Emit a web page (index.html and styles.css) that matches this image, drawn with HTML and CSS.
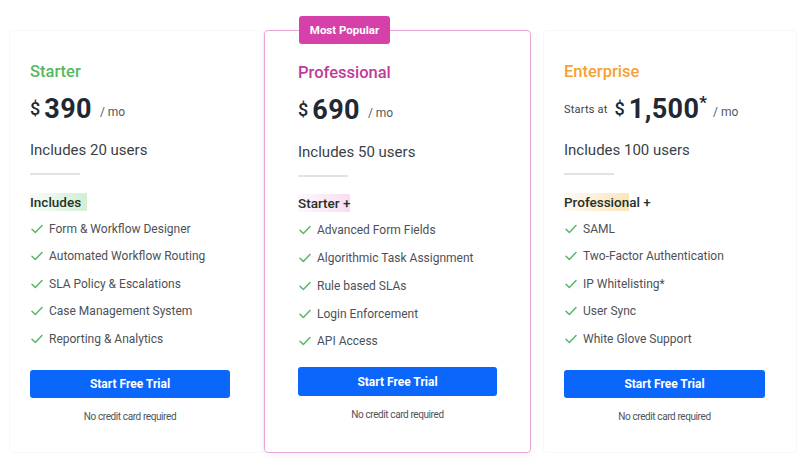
FILE: index.html
```html
<!DOCTYPE html>
<html>
<head>
<meta charset="utf-8">
<link rel="stylesheet" href="styles.css">
</head>
<body>
<div class="pricing">
  <div class="card side">
    <div class="title green">Starter</div>
    <div class="price"><span class="cur">$</span><span class="amt">390</span><span class="per">/ mo</span></div>
    <div class="users">Includes 20 users</div>
    <div class="divider"></div>
    <div class="inc"><span class="hl hl-green">Includes</span></div>
    <ul class="features">
      <li><svg class="check" viewBox="0 0 12 10"><polyline points="1,5.2 4.3,8.5 11,1.5"/></svg>Form &amp; Workflow Designer</li>
      <li><svg class="check" viewBox="0 0 12 10"><polyline points="1,5.2 4.3,8.5 11,1.5"/></svg>Automated Workflow Routing</li>
      <li><svg class="check" viewBox="0 0 12 10"><polyline points="1,5.2 4.3,8.5 11,1.5"/></svg>SLA Policy &amp; Escalations</li>
      <li><svg class="check" viewBox="0 0 12 10"><polyline points="1,5.2 4.3,8.5 11,1.5"/></svg>Case Management System</li>
      <li><svg class="check" viewBox="0 0 12 10"><polyline points="1,5.2 4.3,8.5 11,1.5"/></svg>Reporting &amp; Analytics</li>
    </ul>
    <button class="btn">Start Free Trial</button>
    <div class="note">No credit card required</div>
  </div>

  <div class="card featured">
    <div class="badge">Most Popular</div>
    <div class="title pink">Professional</div>
    <div class="price"><span class="cur">$</span><span class="amt">690</span><span class="per">/ mo</span></div>
    <div class="users">Includes 50 users</div>
    <div class="divider"></div>
    <div class="inc"><span class="hl hl-pink">Starter +</span></div>
    <ul class="features">
      <li><svg class="check" viewBox="0 0 12 10"><polyline points="1,5.2 4.3,8.5 11,1.5"/></svg>Advanced Form Fields</li>
      <li><svg class="check" viewBox="0 0 12 10"><polyline points="1,5.2 4.3,8.5 11,1.5"/></svg>Algorithmic Task Assignment</li>
      <li><svg class="check" viewBox="0 0 12 10"><polyline points="1,5.2 4.3,8.5 11,1.5"/></svg>Rule based SLAs</li>
      <li><svg class="check" viewBox="0 0 12 10"><polyline points="1,5.2 4.3,8.5 11,1.5"/></svg>Login Enforcement</li>
      <li><svg class="check" viewBox="0 0 12 10"><polyline points="1,5.2 4.3,8.5 11,1.5"/></svg>API Access</li>
    </ul>
    <button class="btn">Start Free Trial</button>
    <div class="note">No credit card required</div>
  </div>

  <div class="card side right">
    <div class="title orange">Enterprise</div>
    <div class="price"><span class="starts">Starts at</span><span class="cur">$</span><span class="amt">1,500</span><sup class="star">*</sup><span class="per">/ mo</span></div>
    <div class="users">Includes 100 users</div>
    <div class="divider"></div>
    <div class="inc"><span class="hl hl-orange">Profession</span>al +</div>
    <ul class="features">
      <li><svg class="check" viewBox="0 0 12 10"><polyline points="1,5.2 4.3,8.5 11,1.5"/></svg>SAML</li>
      <li><svg class="check" viewBox="0 0 12 10"><polyline points="1,5.2 4.3,8.5 11,1.5"/></svg>Two-Factor Authentication</li>
      <li><svg class="check" viewBox="0 0 12 10"><polyline points="1,5.2 4.3,8.5 11,1.5"/></svg>IP Whitelisting*</li>
      <li><svg class="check" viewBox="0 0 12 10"><polyline points="1,5.2 4.3,8.5 11,1.5"/></svg>User Sync</li>
      <li><svg class="check" viewBox="0 0 12 10"><polyline points="1,5.2 4.3,8.5 11,1.5"/></svg>White Glove Support</li>
    </ul>
    <button class="btn">Start Free Trial</button>
    <div class="note">No credit card required</div>
  </div>
</div>
</body>
</html>
```
FILE: styles.css
```css
* { box-sizing: border-box; }
html, body { margin: 0; padding: 0; background: #fff; }
body {
  font-family: Roboto, "Liberation Sans", sans-serif;
  color: #2b2f36;
  width: 800px;
  height: 465px;
  overflow: hidden;
}
.pricing {
  display: flex;
  align-items: flex-start;
  padding-top: 30px;
  padding-left: 9px;
}
.card {
  height: 423px;
  display: flex;
  flex-direction: column;
  align-items: flex-start;
  position: relative;
}
.side {
  width: 255px;
  padding: 31px 33px 0 20px;
  border: 1px solid #f7f7f9;
  border-radius: 4px;
}
.right {
  width: 254px;
  margin-left: 12px;
  padding-right: 31px;
}
.featured {
  width: 267px;
  padding: 32px 33px 0 33px;
  border: 1px solid #e9a6d9;
  border-radius: 4px;
  box-shadow: 0 2px 6px rgba(0,0,0,0.06);
}
.badge {
  position: absolute;
  top: -15px;
  left: 34px;
  width: 91px;
  height: 28px;
  background: #d640a9;
  color: #fff;
  font-size: 11.5px;
  font-weight: 700;
  line-height: 28px;
  text-align: center;
  border-radius: 3px;
}
.title {
  font-size: 16.5px;
  line-height: 20px;
  font-weight: 500;
}
.green { color: #55b963; }
.pink { color: #c23b98; }
.orange { color: #f5a136; }
.price {
  margin-top: 12px;
  height: 30px;
  font-size: 27px;
  line-height: 30px;
  white-space: nowrap;
  color: #1f2833;
}
.cur {
  font-size: 18px;
  line-height: 1;
  font-weight: 500;
  vertical-align: 3px;
  margin-right: 4px;
}
.amt {
  font-size: 27px;
  font-weight: 700;
  letter-spacing: 0.4px;
}
.per {
  font-size: 12px;
  line-height: 1;
  color: #555a60;
  margin-left: 8px;
  vertical-align: 2px;
}
.starts {
  font-size: 11px;
  line-height: 1;
  color: #3a3f46;
  margin-right: 7px;
  vertical-align: 5px;
  letter-spacing: 0.2px;
}
.star {
  font-size: 17px;
  font-weight: 700;
  vertical-align: 10px;
  line-height: 0;
  margin-left: 0;
}
.right .per { margin-left: 6px; }
.users {
  margin-top: 16px;
  font-size: 15px;
  line-height: 20px;
  color: #3a3f46;
}
.featured .users { margin-top: 17px; }
.divider {
  margin-top: 13px;
  width: 50px;
  height: 2px;
  background: #e3e3e6;
}
.inc {
  margin-top: 18px;
  font-size: 13.5px;
  line-height: 18px;
  font-weight: 500;
  color: #26302b;
}
.featured .inc { margin-top: 17px; }
.hl { padding: 1px 0; }
.hl-green { background: linear-gradient(90deg, rgba(120, 210, 130, 0.05), rgba(120, 210, 130, 0.35)); padding-right: 6px; }
.hl-pink { background: linear-gradient(90deg, rgba(225, 120, 210, 0.05), rgba(225, 120, 210, 0.25)); }
.hl-orange { background: linear-gradient(90deg, rgba(245, 190, 90, 0.08), rgba(245, 190, 90, 0.4)); }
.features {
  list-style: none;
  margin: 4px 0 0 0;
  padding: 0;
}
.featured .features { margin-top: 4.5px; }
.features li {
  display: flex;
  align-items: center;
  height: 27.5px;
  font-size: 12px;
  color: #4d5157;
  white-space: nowrap;
}
.featured .features li { height: 27.75px; }
.check {
  width: 12px;
  height: 10px;
  margin-right: 6px;
  margin-left: 1px;
  flex: none;
}
.check polyline {
  fill: none;
  stroke: #5cb56a;
  stroke-width: 1.5;
  stroke-linecap: round;
  stroke-linejoin: round;
}
.btn {
  margin-top: 17px;
  width: 100%;
  height: 28px;
  border: none;
  border-radius: 3px;
  background: #0b66fb;
  color: #fff;
  font-family: inherit;
  font-size: 12px;
  font-weight: 700;
  padding: 0;
}
.featured .btn { margin-top: 12px; height: 29px; }
.note {
  align-self: center;
  margin-top: 12px;
  font-size: 10px;
  line-height: 14px;
  letter-spacing: -0.4px;
  color: #4f5359;
}
.featured .note { margin-top: 12px; }
```
